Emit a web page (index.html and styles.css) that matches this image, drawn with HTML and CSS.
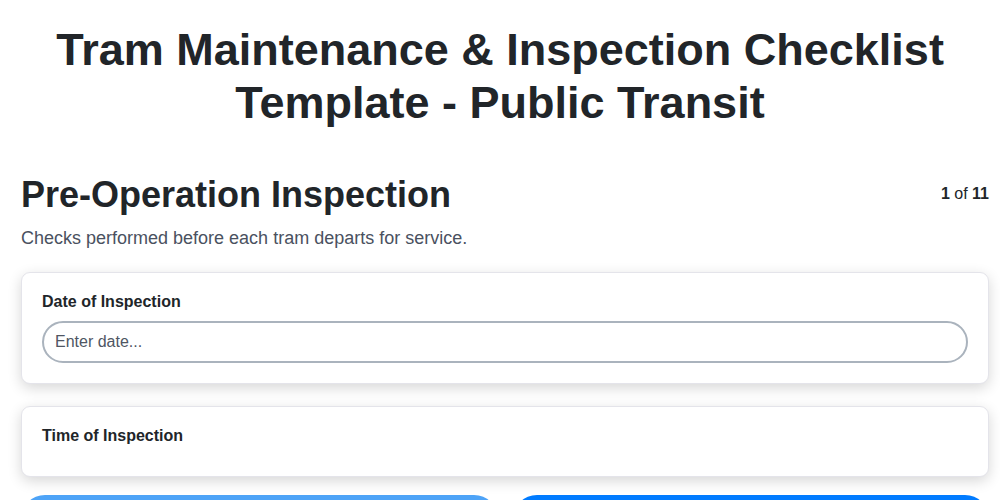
FILE: index.html
```html
<!DOCTYPE html>
<html lang="en">
<head>
<meta charset="utf-8">
<title>Tram Maintenance &amp; Inspection Checklist Template - Public Transit</title>
<link rel="stylesheet" href="styles.css">
</head>
<body>
<header class="header">
  <h1 class="title">Tram Maintenance &amp; Inspection Checklist Template - Public Transit</h1>
</header>
<main class="page">
  <div class="section-head">
    <h2 class="section-title">Pre-Operation Inspection</h2>
    <div class="counter"><b>1</b> of <b>11</b></div>
  </div>
  <p class="section-desc">Checks performed before each tram departs for service.</p>
  <div class="card">
    <label class="field-label">Date of Inspection</label>
    <input class="field-input" type="text" placeholder="Enter date...">
  </div>
  <div class="card card-empty">
    <label class="field-label">Time of Inspection</label>
  </div>
  <div class="buttons">
    <button class="btn btn-prev">Previous</button>
    <button class="btn btn-next">Next</button>
  </div>
</main>
</body>
</html>
```
FILE: styles.css
```css
* { box-sizing: border-box; }
html, body { margin: 0; padding: 0; background: #ffffff; }
body {
  font-family: "Liberation Sans", Arial, sans-serif;
  color: #212529;
}
.header {
  padding: 23px 20px 0;
}
.title {
  margin: 0 0 44px;
  font-size: 45px;
  line-height: 53px;
  font-weight: 700;
  text-align: center;
  color: #212529;
}
.page {
  padding: 0 11px 0 21px;
}
.section-head {
  display: flex;
  justify-content: space-between;
  align-items: flex-start;
}
.section-title {
  margin: 0;
  font-size: 36px;
  line-height: 44px;
  font-weight: 700;
  color: #212529;
}
.counter {
  font-size: 16px;
  line-height: 20px;
  padding-top: 11px;
  color: #212529;
}
.section-desc {
  margin: 10px 0 23px;
  font-size: 18px;
  line-height: 22px;
  color: #4a5160;
}
.card {
  background: #fff;
  border: 1px solid #e4e4ea;
  border-radius: 9px;
  box-shadow: 0 4px 14px rgba(0, 0, 0, 0.16);
  padding: 19px 20px 20px;
  margin-bottom: 22px;
}
.card-empty { padding-bottom: 21px; margin-bottom: 18px; }
.field-label {
  display: block;
  font-size: 16px;
  line-height: 19px;
  font-weight: 700;
  color: #212529;
  margin-bottom: 10px;
}
.field-input {
  display: block;
  width: 100%;
  height: 42px;
  border: 2px solid #aab3bd;
  border-radius: 21px;
  padding: 0 11px;
  font-family: "Liberation Sans", Arial, sans-serif;
  font-size: 16px;
  color: #495057;
  background: #fff;
  outline: none;
}
.field-input::placeholder { color: #4f5663; opacity: 1; }
.buttons {
  display: flex;
  gap: 15px;
}
.btn {
  flex: 1;
  height: 48px;
  border: none;
  border-radius: 24px;
  color: #fff;
  font-family: "Liberation Sans", Arial, sans-serif;
  font-size: 16px;
  font-weight: 700;
}
.btn-prev { background: #4da3f7; }
.btn-next { background: #007bff; }
```
